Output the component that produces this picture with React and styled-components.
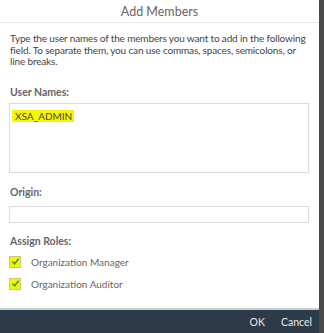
import styled, { createGlobalStyle } from "styled-components";

const Global = createGlobalStyle`
  html, body { margin: 0; padding: 0; background: #4b4b4b; }
  body { font-family: Lato, "Liberation Sans", sans-serif; }
`;

const Dialog = styled.div`
  width: 319px;
  height: 333px;
  background: #fff;
  display: flex;
  flex-direction: column;
`;

const Header = styled.div`
  height: 22px;
  flex-shrink: 0;
  border-bottom: 1px solid #e8e8e8;
  display: flex;
  align-items: center;
  justify-content: center;
  font-size: 12.5px;
  color: #666;
`;

const Content = styled.div`
  padding: 10px 10px 0 9px;
  display: flex;
  flex-direction: column;
`;

const Intro = styled.p`
  margin: 0 0 0 1px;
  font-size: 10px;
  letter-spacing: -0.15px;
  line-height: 11.5px;
  white-space: nowrap;
  color: #444;
`;

const Label = styled.div`
  font-size: 10.5px;
  font-weight: 700;
  color: #666;
  line-height: 12px;
  margin: ${(p) => p.top}px 0 ${(p) => p.bottom}px 1px;
`;

const Box = styled.div`
  height: ${(p) => p.h}px;
  border: 1px solid #dcdcdc;
  box-sizing: border-box;
  padding: 4px 2px;
  line-height: 11px;
`;

const Highlight = styled.span`
  background: #f6f600;
  color: #444;
  font-size: 10px;
  padding: 0 2px 0 3px;
`;

const Role = styled.label`
  display: flex;
  align-items: center;
  gap: 10px;
  font-size: 10px;
  color: #666;
  height: 22px;
`;

const Check = styled.span`
  width: 10px;
  height: 10px;
  border: 1px solid #c9c97a;
  background: #f6f600;
  display: flex;
  align-items: center;
  justify-content: center;
`;

const Footer = styled.div`
  margin-top: auto;
  height: 23px;
  flex-shrink: 0;
  border-top: 2px solid #c7ccd1;
  background: #2d3a47;
  display: flex;
  align-items: center;
  justify-content: flex-end;
  gap: 16px;
  padding-right: 7px;
`;

const FooterButton = styled.span`
  color: #e8ecef;
  font-size: 10.5px;
`;

function Tick() {
  return (
    <svg width="9" height="9" viewBox="0 0 10 10">
      <path d="M1.5 5 L4 7.5 L8.5 2" fill="none" stroke="#3d9a2f" strokeWidth="1.7" />
    </svg>
  );
}

export default function App() {
  return (
    <>
      <Global />
      <Dialog>
        <Header>Add Members</Header>
        <Content>
          <Intro>
            Type the user names of the members you want to add in the following
            <br />
            field. To separate them, you can use commas, spaces, semicolons, or
            <br />
            line breaks.
          </Intro>
          <Label top={18} bottom={5}>User Names:</Label>
          <Box h={70}>
            <Highlight>XSA_ADMIN</Highlight>
          </Box>
          <Label top={13} bottom={8}>Origin:</Label>
          <Box h={17} />
          <Label top={12} bottom={4}>Assign Roles:</Label>
          <Role>
            <Check><Tick /></Check>
            Organization Manager
          </Role>
          <Role>
            <Check><Tick /></Check>
            Organization Auditor
          </Role>
        </Content>
        <Footer>
          <FooterButton>OK</FooterButton>
          <FooterButton>Cancel</FooterButton>
        </Footer>
      </Dialog>
    </>
  );
}
